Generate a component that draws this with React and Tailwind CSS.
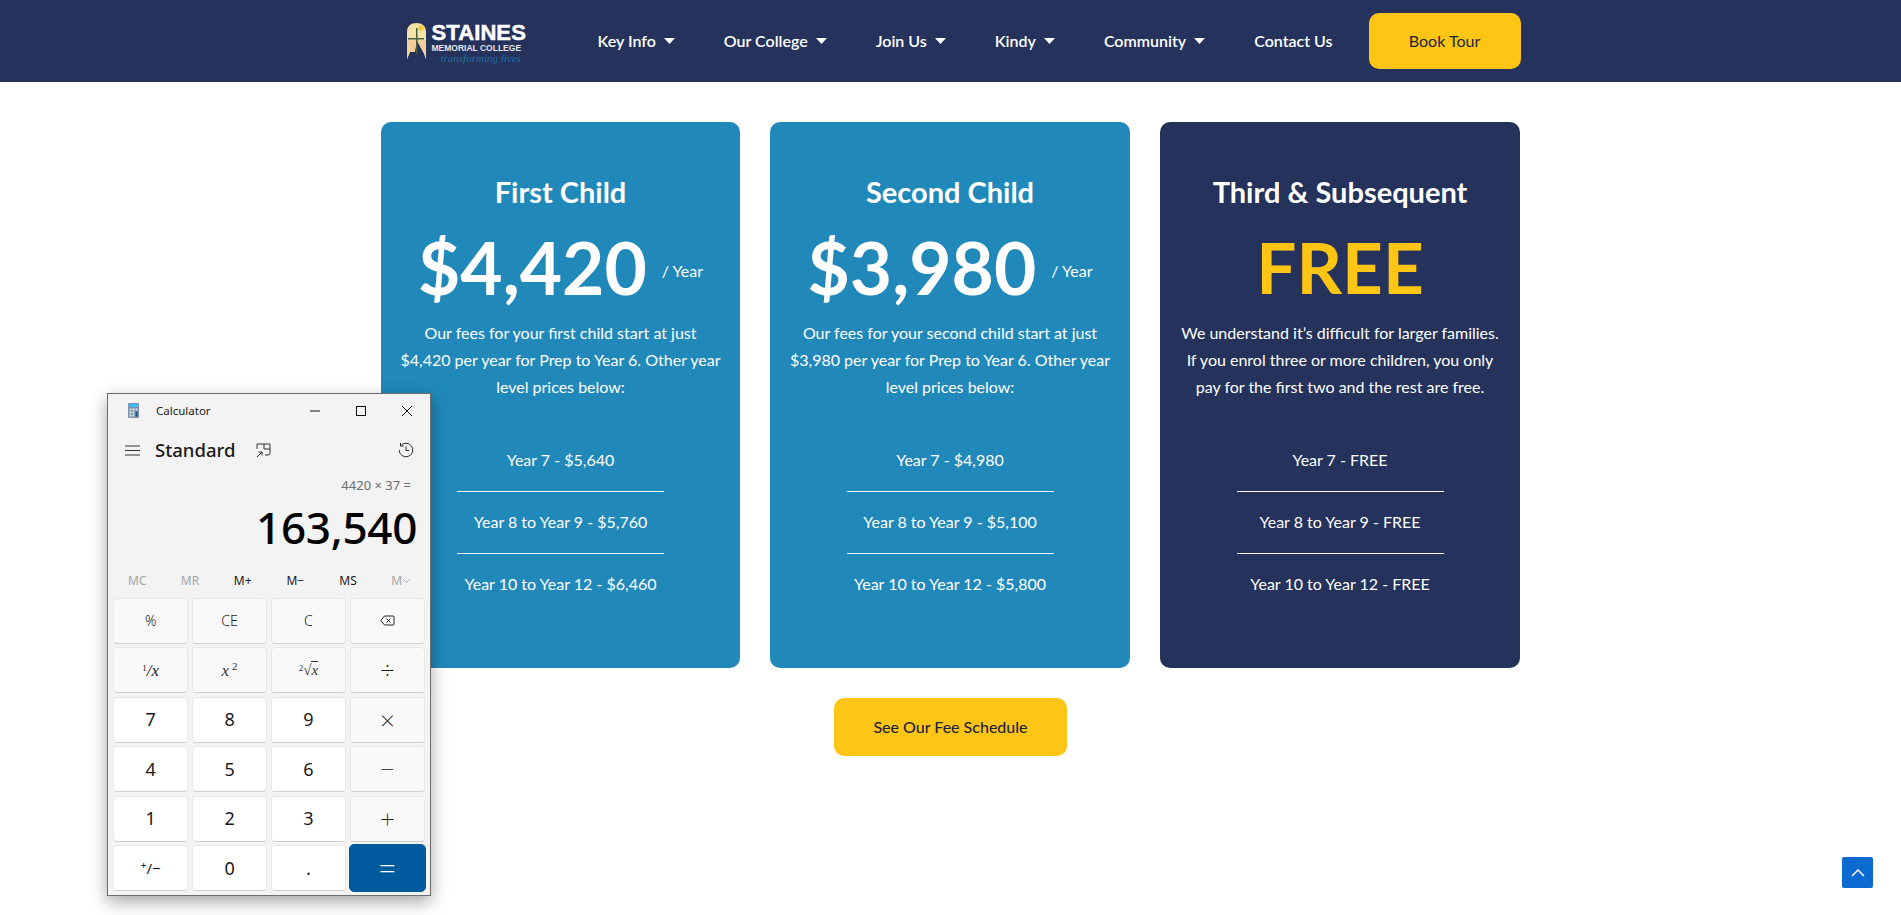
import React from "react";

const navItems = [
  { label: "Key Info", caret: true },
  { label: "Our College", caret: true },
  { label: "Join Us", caret: true },
  { label: "Kindy", caret: true },
  { label: "Community", caret: true },
  { label: "Contact Us", caret: false },
];

const cards = [
  {
    title: "First Child",
    price: "$4,420",
    bg: "bg-[#2188ba]",
    width: "w-[359px]",
    desc: ["Our fees for your first child start at just", "$4,420 per year for Prep to Year 6. Other year", "level prices below:"],
    rows: ["Year 7 - $5,640", "Year 8 to Year 9 - $5,760", "Year 10 to Year 12 - $6,460"],
  },
  {
    title: "Second Child",
    price: "$3,980",
    bg: "bg-[#2188ba]",
    width: "w-[360px]",
    desc: ["Our fees for your second child start at just", "$3,980 per year for Prep to Year 6. Other year", "level prices below:"],
    rows: ["Year 7 - $4,980", "Year 8 to Year 9 - $5,100", "Year 10 to Year 12 - $5,800"],
  },
  {
    title: "Third & Subsequent",
    free: true,
    bg: "bg-[#25325b]",
    width: "w-[360px]",
    desc: ["We understand it’s difficult for larger families.", "If you enrol three or more children, you only", "pay for the first two and the rest are free."],
    rows: ["Year 7 - FREE", "Year 8 to Year 9 - FREE", "Year 10 to Year 12 - FREE"],
  },
];

const Caret = () => (
  <svg width="11" height="6" viewBox="0 0 11 6" className="ml-[8px]">
    <path d="M0 0h11L5.500 6z" fill="#fff" />
  </svg>
);

const Logo = () => (
  <div className="flex items-start w-[125px] h-[36px] mt-[-1px]">
    <svg width="19" height="36" viewBox="0 0 19 36">
      <path d="M0 36V9C0 3 4 0 9.500 0S19 3 19 9v27l-3-7H3z" fill="#f3e3a6" />
      <path d="M0 36V17h19v19l-3-7H3z" fill="#f2cf9a" />
      <path d="M7 34l3-16 6 11 2 5z" fill="#25325b" />
      <path d="M9 5h1.500v26H9zM1 15h16v1.500H1z" fill="#44603f" />
      <circle cx="14" cy="5" r="2.500" fill="#f5c52a" />
    </svg>
    <div className="ml-[6px] flex flex-col text-white font-['Liberation_Sans',sans-serif] font-bold">
      <span className="text-[22px] leading-[19px] tracking-[0.1px] [-webkit-text-stroke:0.5px_white]">STAINES</span>
      <span className="text-[8.5px] leading-[10px] text-[#e4e6ec] mt-[1px] whitespace-nowrap">MEMORIAL COLLEGE</span>
      <span className="text-[11px] leading-[11px] font-normal italic text-[#1f6fa5] ml-[9px] whitespace-nowrap font-['Liberation_Serif',serif]">transforming lives</span>
    </div>
  </div>
);

const Header = () => (
  <header className="h-[82px] bg-[#25325b] flex justify-center">
    <div className="w-[1140px] flex items-center pl-[26px] font-['Lato',sans-serif]">
      <Logo />
      <nav className="flex items-center ml-[66px] gap-[49px] text-white text-[16px] font-semibold">
        {navItems.map((item) => (
          <a key={item.label} className="flex items-center whitespace-nowrap">
            {item.label}
            {item.caret && <Caret />}
          </a>
        ))}
      </nav>
      <button className="ml-auto w-[152px] h-[56px] rounded-[10px] bg-[#fec514] text-[#1c2444] text-[16px]">
        Book Tour
      </button>
    </div>
  </header>
);

const FeeCard = ({ card }) => (
  <div className={`${card.width} h-[546px] rounded-[10px] ${card.bg} text-white text-center pt-[52px] flex flex-col items-center`}>
    <h2 className="text-[29px] leading-[36px] font-bold">{card.title}</h2>
    <div className="h-[94px] mt-[10px] flex items-center justify-center">
      {card.free ? (
        <span className="text-[71px] leading-[94px] font-bold text-[#fec514]">FREE</span>
      ) : (
        <>
          <span className="text-[73px] leading-[94px] font-bold">{card.price}</span>
          <span className="text-[16px] ml-[15px] mt-[8px]">/ Year</span>
        </>
      )}
    </div>
    <div className="mt-[5px] text-[16px] leading-[27px] whitespace-nowrap">
      {card.desc.map((line) => (
        <p key={line}>{line}</p>
      ))}
    </div>
    <ul className="mt-[30px] w-[207px] text-[16px] leading-[24px] whitespace-nowrap flex flex-col items-center">
      {card.rows.map((row, i) => (
        <li key={row} className={`w-full flex justify-center pt-[17.5px] pb-[19.5px] ${i < 2 ? "border-b border-white" : ""}`}>
          {row}
        </li>
      ))}
    </ul>
  </div>
);

const calcKeys = [
  { label: "%" }, { label: "CE" }, { label: "C" }, { label: "back" },
  { label: "inv" }, { label: "sq" }, { label: "root" }, { label: "÷", op: true },
  { label: "7", white: true }, { label: "8", white: true }, { label: "9", white: true }, { label: "×", op: true },
  { label: "4", white: true }, { label: "5", white: true }, { label: "6", white: true }, { label: "−", op: true },
  { label: "1", white: true }, { label: "2", white: true }, { label: "3", white: true }, { label: "+", op: true },
  { label: "neg", white: true }, { label: "0", white: true }, { label: ".", white: true }, { label: "=", primary: true },
];

const KeyLabel = ({ item }) => {
  const { label, op, white, primary } = item;
  if (label === "back") {
    return (
      <svg width="15" height="11" viewBox="0 0 15 11" fill="none" stroke="#222" strokeWidth="1">
        <path d="M4.500 1H13a1 1 0 0 1 1 1v7a1 1 0 0 1-1 1H4.500L.8 5.500z" />
        <path d="M6.500 3.500l4 4M10.500 3.500l-4 4" />
      </svg>
    );
  }
  if (label === "inv") return <span className="font-['Liberation_Serif',serif] italic text-[17px]"><sup className="text-[9px] not-italic">1</sup>/x</span>;
  if (label === "sq") return <span className="font-['Liberation_Serif',serif] italic text-[17px] text-[#333]">x<sup className="text-[11px] not-italic ml-[3px]">2</sup></span>;
  if (label === "root") return <span className="font-['Liberation_Serif',serif] italic text-[15px] text-[#333]"><sup className="text-[9px] not-italic">2</sup>√<span className="border-t border-[#333]">x</span></span>;
  if (label === "neg") return <span className="text-[15px]"><sup className="text-[10px]">+</sup>/−</span>;
  if (op) return <span className="text-[26px] font-extralight leading-none">{label}</span>;
  if (primary) return <span className="text-[30px] font-light leading-none">{label}</span>;
  if (white) return <span className="text-[18px]">{label}</span>;
  return <span className="text-[14px] font-light">{label}</span>;
};

const Calculator = () => (
  <div className="absolute left-[107px] top-[393px] w-[324px] h-[503px] bg-[#f3f3f3] border border-[#6e6e6e] shadow-[0_6px_16px_rgba(0,0,0,0.35)] flex flex-col font-['Noto_Sans',sans-serif] text-[#1a1a1a]">
    <div className="h-[33px] flex items-center pl-[20px] shrink-0">
      <svg width="11" height="15" viewBox="0 0 11 15">
        <rect width="11" height="15" rx="1" fill="#7f93a8" />
        <rect x="1" y="1" width="9" height="3" fill="#35c0f0" />
        <rect x="1.500" y="5.500" width="2" height="2" fill="#dfe6ee" />
        <rect x="4.500" y="5.500" width="2" height="2" fill="#dfe6ee" />
        <rect x="7.500" y="5.500" width="2" height="2" fill="#dfe6ee" />
        <rect x="1.500" y="8.500" width="2" height="2" fill="#dfe6ee" />
        <rect x="4.500" y="8.500" width="2" height="2" fill="#dfe6ee" />
        <rect x="1.500" y="11.500" width="2" height="2" fill="#dfe6ee" />
        <rect x="4.500" y="11.500" width="2" height="2" fill="#dfe6ee" />
        <rect x="7.500" y="8.500" width="2" height="5" fill="#1f4f8f" />
      </svg>
      <span className="ml-[17px] text-[11.5px]">Calculator</span>
      <div className="ml-auto flex items-center pr-[18px] gap-[36px]">
        <svg width="10" height="10" viewBox="0 0 10 10"><path d="M0 5h10" stroke="#111" /></svg>
        <svg width="10" height="10" viewBox="0 0 10 10" fill="none"><rect x=".5" y=".5" width="9" height="9" stroke="#111" /></svg>
        <svg width="10" height="10" viewBox="0 0 10 10"><path d="M0 0l10 10M10 0L0 10" stroke="#111" /></svg>
      </div>
    </div>
    <div className="h-[46px] flex items-center pl-[17px] pr-[16px] shrink-0">
      <svg width="15" height="11" viewBox="0 0 15 11"><path d="M0 1h15M0 5.500h15M0 10h15" stroke="#333" /></svg>
      <span className="ml-[15px] text-[18.5px] font-medium">Standard</span>
      <svg width="15" height="15" viewBox="0 0 15 15" fill="none" stroke="#333" className="ml-[21px]">
        <path d="M1 6V1h7v5M8 1h6v9a2 2 0 0 1-2 2H9M8 6h6M1 14l5-5M2.500 9H6v3.500" />
      </svg>
      <svg width="16" height="16" viewBox="0 0 16 16" fill="none" stroke="#333" className="ml-auto">
        <path d="M2.500 4A6.800 6.800 0 1 1 1.200 8M2.500.8V4h3.200M8 4.500V8.500h3" />
      </svg>
    </div>
    <div className="pr-[19px] text-right text-[13px] leading-[18px] text-[#6d6d6d] mt-[3px]">4420 × 37 =</div>
    <div className="pr-[13px] text-right text-[44px] leading-[52px] font-medium text-black mt-[7px] tracking-[-0.3px]">163,540</div>
    <div className="grid grid-cols-6 px-[3px] mt-[19px] text-[12px] leading-[18px] text-center">
      <span className="text-[#a6a6a6]">MC</span>
      <span className="text-[#a6a6a6]">MR</span>
      <span>M+</span>
      <span>M−</span>
      <span>MS</span>
      <span className="text-[#a6a6a6] flex items-center justify-center">
        M
        <svg width="7" height="4" viewBox="0 0 7 4" fill="none" stroke="#a6a6a6" className="ml-[1px]">
          <path d="M.5.5l3 3 3-3" />
        </svg>
      </span>
    </div>
    <div className="grid grid-cols-4 grid-rows-6 gap-[3.5px] mt-[8px] px-[5px] h-[293px]">
      {calcKeys.map((key) => (
        <button
          key={key.label}
          className={`flex items-center justify-center rounded-[4px] border ${
            key.primary
              ? "bg-[#005a9e] border-[#005a9e] text-white -m-[1px] rounded-[5px]"
              : key.white
              ? "bg-white border-[#e8e8e8] border-b-[#cfcfcf]"
              : "bg-[#f9f9f9] border-[#e8e8e8] border-b-[#cfcfcf]"
          }`}
        >
          <KeyLabel item={key} />
        </button>
      ))}
    </div>
  </div>
);

export default function App() {
  return (
    <div className="relative min-h-[915px] bg-white font-['Lato',sans-serif]">
      <Header />
      <main className="flex flex-col items-center pt-[40px]">
        <div className="flex gap-[30px]">
          {cards.map((card) => (
            <FeeCard key={card.title} card={card} />
          ))}
        </div>
        <button className="mt-[30px] w-[233px] h-[58px] rounded-[10px] bg-[#fec514] text-[#1c2444] text-[16px] font-medium">
          See Our Fee Schedule
        </button>
      </main>
      <Calculator />
      <a className="fixed right-[28px] bottom-[27px] w-[31px] h-[31px] rounded-[2px] bg-[#0b6bd0] flex items-center justify-center">
        <svg width="14" height="8" viewBox="0 0 14 8" fill="none" stroke="#fff" strokeWidth="1.500">
          <path d="M1 7l6-6 6 6" />
        </svg>
      </a>
    </div>
  );
}
